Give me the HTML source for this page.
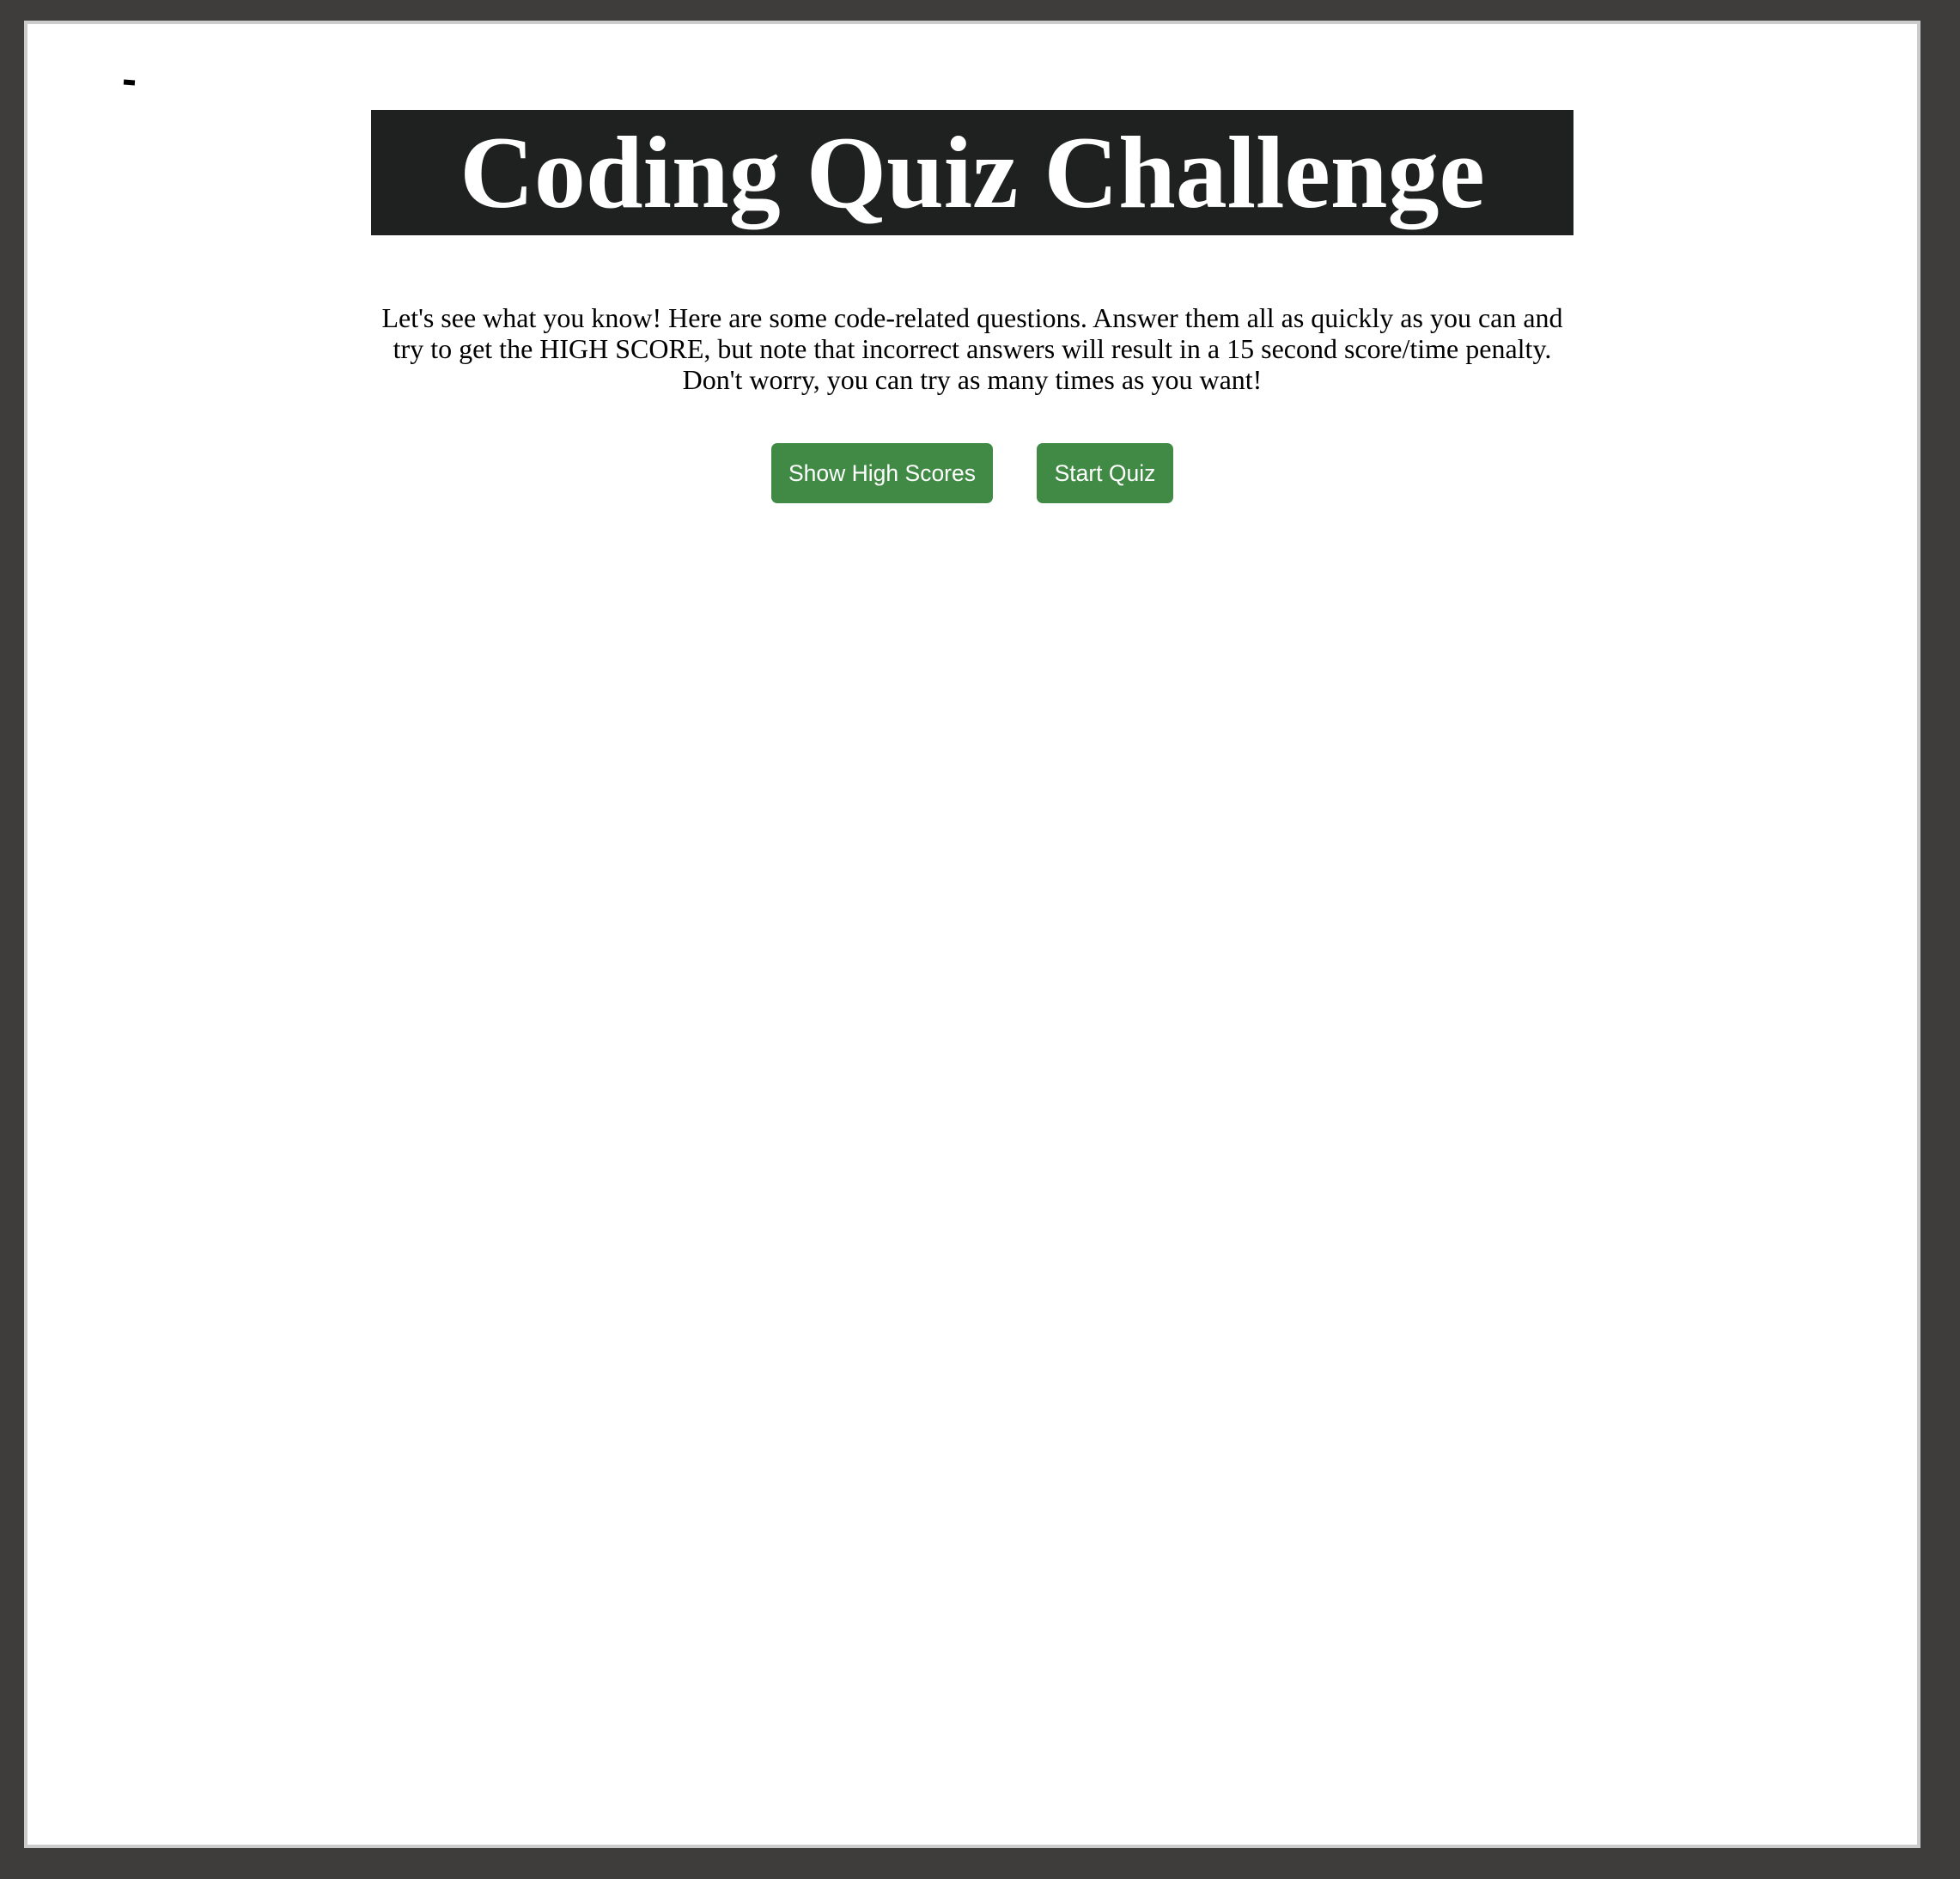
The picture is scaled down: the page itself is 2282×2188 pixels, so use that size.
<!DOCTYPE html>
<html><head><meta charset="utf-8"><style>
html,body{margin:0;padding:0;}
body{width:2282px;height:2188px;background:#3e3d3c;position:relative;overflow:hidden;}
.page{position:absolute;left:28px;top:24px;width:2208px;height:2128px;background:#fff;border:4px solid #cbcbcb;box-sizing:border-box;}
.dash{position:absolute;left:144px;top:93px;width:13px;height:6px;background:#000;transform:rotate(4deg);}
.title{position:absolute;left:432px;top:128px;width:1400px;height:146px;background:#1f2020;color:#fff;font-family:"Liberation Serif",serif;font-weight:bold;font-size:120px;line-height:146px;text-align:center;white-space:nowrap;}
.p{position:absolute;left:332px;width:1600px;top:352px;font-family:"Liberation Serif",serif;font-size:32px;line-height:36px;text-align:center;color:#000;white-space:nowrap;}
.btn{position:absolute;top:516px;height:70px;background:#418a45;color:#fff;border-radius:7px;font-family:"Liberation Sans",sans-serif;font-size:26.5px;line-height:70px;text-align:center;white-space:nowrap;}
</style></head><body>
<div class="page"></div>
<div class="dash"></div>
<div class="title">Coding Quiz Challenge</div>
<div class="p">Let's see what you know! Here are some code-related questions. Answer them all as quickly as you can and<br>try to get the HIGH SCORE, but note that incorrect answers will result in a 15 second score/time penalty.<br>Don't worry, you can try as many times as you want!</div>
<div class="btn" style="left:898px;width:258px;">Show High Scores</div>
<div class="btn" style="left:1207px;width:159px;">Start Quiz</div>
</body></html>
